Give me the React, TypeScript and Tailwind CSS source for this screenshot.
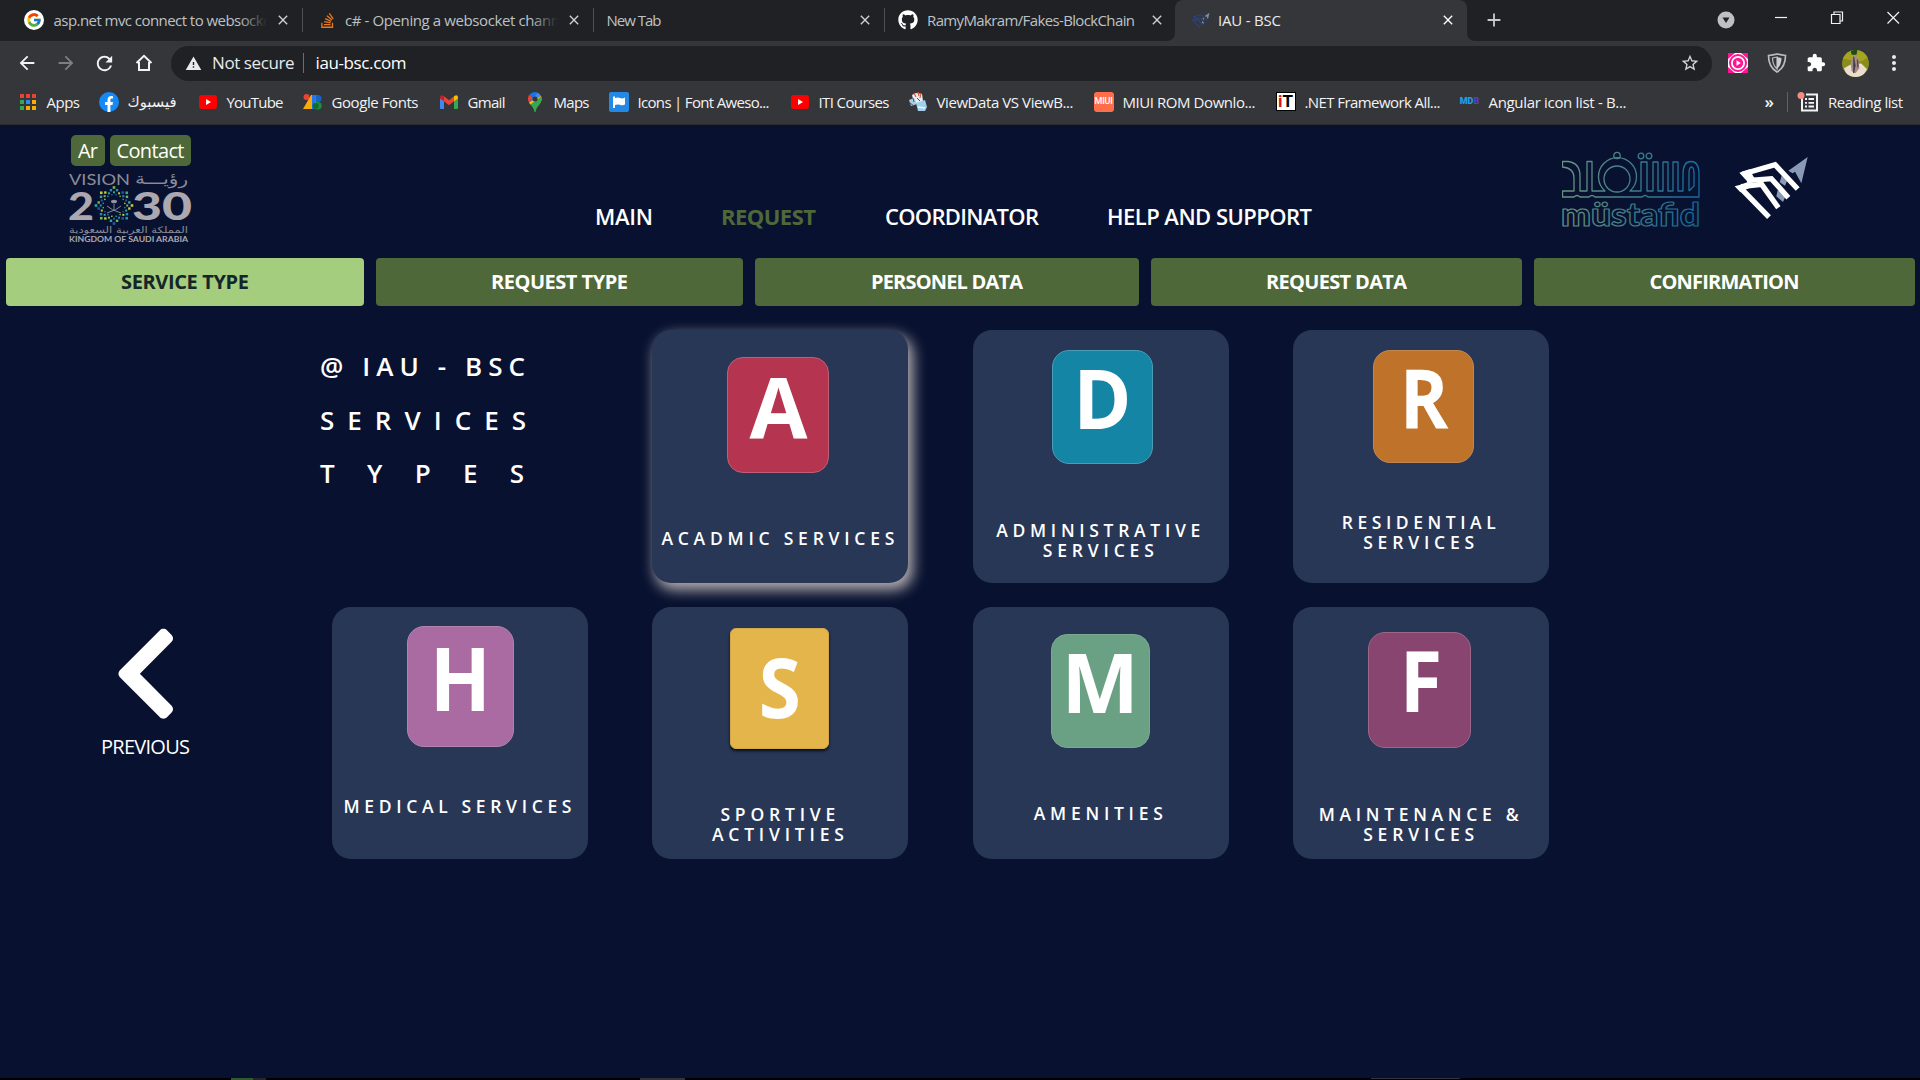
import { useLayoutEffect, useRef, useState } from "react";
import type { ReactNode } from "react";
import { FcGoogle } from "react-icons/fc";
import { FaChevronLeft, FaGithub, FaStackOverflow } from "react-icons/fa";
import {
  MdAdd,
  MdArrowBack,
  MdArrowForward,
  MdClose,
  MdExtension,
  MdMoreVert,
  MdRefresh,
  MdStarBorder,
  MdWarning,
} from "react-icons/md";

/* Text tracked so that it spans exactly `w` pixels. */
function Fit({ w, children, className = "" }: { w: number; children: string; className?: string }) {
  const ref = useRef<HTMLSpanElement>(null);
  const [spacing, setSpacing] = useState(0);
  useLayoutEffect(() => {
    const el = ref.current;
    if (!el) return;
    el.style.letterSpacing = "0px";
    const natural = el.getBoundingClientRect().width;
    const next = (w - natural) / Math.max(1, children.length - 1);
    el.style.letterSpacing = `${next}px`;
    setSpacing(next);
  }, [w, children]);
  return (
    <span
      ref={ref}
      className={`inline-block flex-none whitespace-pre ${className}`}
      style={{ letterSpacing: spacing, marginRight: -spacing }}
    >
      {children}
    </span>
  );
}

/* ---------- browser icons ---------- */

function BscMark({ className, light, dark }: { className: string; light: string; dark: string }) {
  return (
    <svg viewBox="700 90 230 200" className={className} fill="none">
      <path d="M924 96 L866 137 L879 145 L886 140 L905 175 Z" fill={dark} />
      <path d="M846 152 L862 168 L856 182 L840 172 Z M834 196 L862 204 L850 231 L830 214 Z" fill={dark} />
      <g stroke={light} strokeWidth="16">
        <path d="M762 168 L740 144 L826 119 L894 192" strokeMiterlimit="10" />
        <path d="M742 167 L815 161 L866 218" />
        <path d="M724 185 L786 178 L836 248" />
        <path d="M745 179 L724 190 L808 276" />
      </g>
      <path d="M719 143 L750 133 L768 168 L745 172 Z M705 184 L745 173 L750 188 L722 202 Z" fill={light} />
    </svg>
  );
}

function YouTubeIcon() {
  return (
    <svg viewBox="0 0 18 14" className="h-[14px] w-[18px]">
      <rect width="18" height="14" rx="3" fill="#ff0000" />
      <path d="M7 4 L12 7 L7 10 Z" fill="#fff" />
    </svg>
  );
}

function AppsIcon() {
  const colors = ["#ea4335", "#ea4335", "#ea4335", "#34a853", "#2a8cf5", "#fbab05", "#34a853", "#fbab05", "#fbab05"];
  return (
    <div className="grid grid-cols-3 gap-[2px]">
      {colors.map((c, i) => (
        <span key={i} className="size-1" style={{ background: c }} />
      ))}
    </div>
  );
}

function FacebookIcon() {
  return (
    <svg viewBox="0 0 20 20" className="size-5">
      <circle cx="10" cy="10" r="10" fill="#1489f8" />
      <path d="M8.5 20 V13 H6 V10 H8.5 V8 C8.5 5.3 10 4 12.2 4 L14 4.2 V6.6 H12.8 C11.7 6.6 11.4 7.2 11.4 8 V10 H14 L13.5 13 H11.4 V20 Z" fill="#fff" />
    </svg>
  );
}

function GoogleFontsIcon() {
  return (
    <svg viewBox="0 0 20 16" className="h-4 w-5">
      <circle cx="3.5" cy="3" r="3" fill="#ea4335" />
      <path d="M8 1 H13 V15 H10 L5 15 H0 Z" fill="#fbab05" />
      <path d="M9 1 H12.5 V15 H9 Z" fill="#2a75e8" />
      <path d="M12.5 1 H15 A3.5 3.5 0 0 1 15 8 H12.5 Z" fill="#1565c8" />
      <path d="M12.5 8 H15 A3.5 3.5 0 0 1 15 15.4 H12.5 Z" fill="#1e8e3e" />
      <circle cx="12.5" cy="12" r="3" fill="#136c2e" />
    </svg>
  );
}

function GmailIcon() {
  return (
    <svg viewBox="0 0 18 14" className="h-[14px] w-[18px]">
      <path d="M0 3 V13 Q0 14 1 14 H4 V5 Z" fill="#4285f4" />
      <path d="M18 3 V13 Q18 14 17 14 H14 V5 Z" fill="#34a853" />
      <path d="M4 1.2 L9 5.2 L14 1.2 V6.2 L9 10.2 L4 6.2 Z" fill="#ea4335" />
      <path d="M0 2 Q.6 -1 4 1.2 V6.2 L0 3.4 Z" fill="#c5221f" />
      <path d="M18 2 Q17.4 -1 14 1.2 V6.2 L18 3.4 Z" fill="#fbbc04" />
    </svg>
  );
}

function MapsIcon() {
  return (
    <svg viewBox="0 0 14 20" className="h-5 w-[14px]">
      <path d="M7 0 A7 7 0 0 0 1.4 2.8 L5 6 L9.5 .5 A7 7 0 0 0 7 0 Z" fill="#1a73e8" />
      <path d="M1.4 2.8 A7 7 0 0 0 1 10.5 L5 6 Z" fill="#ea4335" />
      <path d="M9.5 .5 A7 7 0 0 1 13 4 L2.4 12.6 L1 10.5 Z" fill="#4285f4" />
      <path d="M13 4 C15 9 12 11.500 10 14 L2.400 12.600 L1 10.500 Z" fill="#fbbc04" />
      <path d="M13.200 4.500 C15 11 9 13 7.500 20 H6.500 C6 17 4.500 15 2.400 12.600 Z" fill="#34a853" />
      <circle cx="7" cy="7" r="2.500" fill="#35363a" />
    </svg>
  );
}

function FlagIcon() {
  return (
    <svg viewBox="0 0 20 20" className="size-5">
      <rect width="20" height="20" rx="2" fill="#228ae6" />
      <path d="M4 4.500 H6 V6 Q8.500 4.800 11 6 Q13.500 7 16 5.500 V12.500 Q13.500 14 11 12.800 Q8.500 12 6 13 V16 H4 Z" fill="#fff" />
    </svg>
  );
}

function CodeProjectIcon() {
  return (
    <svg viewBox="0 0 20 20" className="size-5">
      <path d="M4 3 L8 1 L14 2 L15 9 L12 12 L6 11 Z" fill="#e8eef2" />
      <path d="M6 1 L8 5 M10 0 L11 4 M13 1 L12 6" stroke="#d9573b" strokeWidth="1.2" />
      <path d="M1 8 L6 6 L9 12 L3 14 Z" fill="#a9cfe4" />
      <path d="M8 11 L17 8 L19 15 L17 19 L10 19 Z" fill="#9fd0ee" />
      <path d="M5 6 L6 10 M9 6 L12 9 M2 11 L6 14" stroke="#43545f" strokeWidth="1" />
      <path d="M10 15 L17 16" stroke="#e9f6ff" strokeWidth="1.5" />
    </svg>
  );
}

function MiuiIcon() {
  return (
    <span className="flex size-5 items-center justify-center rounded-[3px] bg-[#ff6e4a] font-['Roboto'] text-[9px] leading-none font-medium tracking-[-0.2px] text-white">
      MIUI
    </span>
  );
}

function ItIcon() {
  return (
    <span className="flex h-[19px] w-5 items-center justify-center border border-black bg-white font-['Roboto'] text-[17px] leading-none font-bold text-black">
      <span className="text-[#d5121d]">i</span>T
    </span>
  );
}

function MdbIcon() {
  return (
    <span className="flex font-['Roboto'] text-[9px] leading-none font-black text-[#1aa0e8]">
      MD<span className="text-[#5a3fc0]">B</span>
    </span>
  );
}

/* ---------- browser chrome ---------- */

type TabProps = { icon?: ReactNode; title: string; textWidth: number; box: string; lead: string; fade?: boolean };

function Tab({ icon, title, textWidth, box, lead, fade }: TabProps) {
  return (
    <div className={`flex h-[40px] flex-none items-center ${box}`}>
      <div className={`flex h-full flex-none items-center ${lead}`}>{icon}</div>
      <div className="relative min-w-0 flex-1 overflow-hidden pb-px text-[15px] leading-[20px] text-[#bdc1c6]">
        <Fit w={textWidth}>{title}</Fit>
        {fade && <span className="absolute inset-y-0 right-0 w-7 bg-linear-to-r from-transparent to-[#202124]" />}
      </div>
      <MdClose className="mr-[11px] ml-2 size-4 flex-none text-[#d0d2d5]" />
      <span className="h-6 w-px flex-none bg-[#4d4f53]" />
    </div>
  );
}

function TabStrip() {
  return (
    <div className="flex h-[41px] bg-[#202124]">
      <Tab
        box="w-[303px]"
        lead="w-[53.500px] pl-6"
        fade
        title="asp.net mvc connect to websocke"
        textWidth={218}
        icon={
          <span className="flex size-5 items-center justify-center rounded-full bg-white">
            <FcGoogle className="size-4" />
          </span>
        }
      />
      <Tab
        box="w-[291px]"
        lead="w-[42px] pl-4"
        fade
        title="c# - Opening a websocket chann"
        textWidth={215}
        icon={<FaStackOverflow className="size-[17px] text-[#e8791e]" />}
      />
      <Tab box="w-[291px]" lead="w-[12.500px]" title="New Tab" textWidth={55} />
      <div className="flex h-[40px] w-[282px] flex-none items-center">
        <div className="flex w-[42px] pl-[13px]">
          <FaGithub className="size-5 text-white" />
        </div>
        <Fit w={208} className="pb-px text-[15px] leading-5 text-[#bdc1c6]">
          RamyMakram/Fakes-BlockChain
        </Fit>
        <MdClose className="ml-[14px] size-4 flex-none text-[#d0d2d5]" />
      </div>
      <div className="w-2 flex-none bg-[#35363a]">
        <div className="h-full rounded-br-lg bg-[#202124]" />
      </div>
      <div className="flex w-[292px] flex-none items-center rounded-t-lg bg-[#35363a] pb-px">
        <div className="w-[43px] pl-[16px]">
          <BscMark className="h-[17px] w-[19px]" light="#2e4272" dark="#7d8fb0" />
        </div>
        <Fit w={63} className="pb-px text-[15px] leading-5 text-[#e8eaed]">
          IAU - BSC
        </Fit>
        <MdClose className="mr-[11px] ml-auto size-4 text-white" />
      </div>
      <div className="w-2 flex-none bg-[#35363a]">
        <div className="h-full rounded-bl-lg bg-[#202124]" />
      </div>
      <div className="flex flex-1 items-center pb-px">
        <MdAdd className="ml-[8px] size-[22px] text-[#c6c9cd]" />
        <svg viewBox="0 0 18 18" className="ml-[212px] size-[18px]">
          <circle cx="9" cy="9" r="8.500" fill="#bdc1c6" />
          <path d="M5.500 6.500 H12.500 L9 12 Z" fill="#202124" />
        </svg>
        <svg viewBox="0 0 130 20" className="mb-[4px] ml-[36px] h-5 w-[130px] flex-none" fill="none" stroke="#f1f1f1" strokeWidth="1.200">
          <path d="M4 9.500 H16" />
          <path d="M60.500 6.500 H69 V15.500 H60.500 Z M63 6.500 V4 H71.500 V13 H69" />
          <path d="M116.500 4 L128 15.500 M128 4 L116.500 15.500" />
        </svg>
      </div>
    </div>
  );
}

function Toolbar() {
  return (
    <div className="flex h-[44px] items-center bg-[#35363a]">
      <div className="flex w-[171px] flex-none items-center pl-4 text-[#f1f3f4]">
        <MdArrowBack className="size-[22px]" />
        <MdArrowForward className="ml-[17px] size-[22px] text-[#7d7f83]" />
        <MdRefresh className="ml-[16px] size-[23px]" />
        <svg viewBox="0 0 18 18" className="ml-[19px] size-[18px]" fill="none" stroke="currentColor" strokeWidth="2">
          <path d="M1.500 9 L9 1.800 L16.500 9 M4 8 V16 H14 V8" />
        </svg>
      </div>
      <div className="flex h-[35px] w-[1541px] flex-none items-center rounded-full bg-[#202124] pl-[14px] text-[17px] text-white">
        <MdWarning className="size-[17px] text-[#e8eaed]" />
        <div className="ml-[10px] flex w-[91px] items-center text-[#e8eaed]">
          <Fit w={82.5}>Not secure</Fit>
        </div>
        <span className="h-5 w-px bg-[#6a6c70]" />
        <div className="ml-[11.500px]">
          <Fit w={91}>iau-bsc.com</Fit>
        </div>
        <MdStarBorder className="mr-[12px] ml-auto size-[20px] text-[#d5d7da]" />
      </div>
      <div className="flex flex-1 items-center">
        <svg viewBox="0 0 20 20" className="ml-[16px] size-5 flex-none">
          <rect width="20" height="20" fill="#fff" />
          <path d="M0 0 H7 L0 6 Z M13 0 H20 V6 Z M0 14 L7 20 H0 Z M20 14 V20 H13 Z" fill="#ff1493" />
          <circle cx="10" cy="10" r="8" fill="#fff" stroke="#ff1493" strokeWidth="2" />
          <circle cx="10" cy="10" r="5.200" fill="#ff1493" />
          <path d="M8.500 7.200 L12.800 10 L8.500 12.800 Z" fill="#fff" />
        </svg>
        <svg viewBox="0 0 20 20" className="ml-[19px] size-5 flex-none" fill="none">
          <path d="M1.500 2.500 Q6 2 10 1 Q14 2 18.500 2.500 Q18.500 14 10 19 Q1.500 14 1.500 2.500 Z" stroke="#b9bbbe" strokeWidth="1.700" />
          <path d="M5.500 5 L10 4 V16 Q5.500 12 5.500 5 Z" stroke="#b9bbbe" strokeWidth="1.200" />
          <path d="M10 4 L14.500 5 Q14.500 12 10 16 Z" fill="#c9cbce" />
        </svg>
        <MdExtension className="ml-[19px] size-5 flex-none text-white" />
        <svg viewBox="0 0 28 28" className="ml-[16px] size-[27px] flex-none overflow-hidden rounded-full">
          <rect width="28" height="28" fill="#8a8c1d" />
          <path d="M0 0 H28 V7 L20 12 L0 9 Z" fill="#a5a51f" />
          <path d="M9 0 H16 L15 5 H10 Z" fill="#1c4a1c" />
          <path d="M2 19 L9 15 L20 14 L26 20 L21 28 H6 Z" fill="#eadfce" />
          <path d="M11 7 L14 5 L17 9 L18 19 L14 24 L10 22 L9 14 Z" fill="#a58a86" />
          <path d="M12 7 L13.500 16 L12 24 M16 10 L16.500 18" stroke="#4c4650" strokeWidth="1.300" />
        </svg>
        <MdMoreVert className="ml-[13px] size-6 flex-none text-[#e8eaed]" />
      </div>
    </div>
  );
}

const bookmarks: { icon: ReactNode; label: string; width: number; box: string }[] = [
  { icon: <AppsIcon />, label: "Apps", width: 33.5, box: "w-[81px]" },
  { icon: <FacebookIcon />, label: "فيسبوك", width: 0, box: "w-[99px]" },
  { icon: <YouTubeIcon />, label: "YouTube", width: 57, box: "w-[105px]" },
  { icon: <GoogleFontsIcon />, label: "Google Fonts", width: 87, box: "w-[136px]" },
  { icon: <GmailIcon />, label: "Gmail", width: 38, box: "w-[86px]" },
  { icon: <MapsIcon />, label: "Maps", width: 36, box: "w-[84px]" },
  { icon: <FlagIcon />, label: "Icons | Font Aweso...", width: 132, box: "w-[181px]" },
  { icon: <YouTubeIcon />, label: "ITI Courses", width: 71, box: "w-[118px]" },
  { icon: <CodeProjectIcon />, label: "ViewData VS ViewB...", width: 137, box: "w-[186px]" },
  { icon: <MiuiIcon />, label: "MIUI ROM Downlo...", width: 133, box: "w-[182px]" },
  { icon: <ItIcon />, label: ".NET Framework All...", width: 136, box: "w-[184px]" },
  { icon: <MdbIcon />, label: "Angular icon list - B...", width: 138, box: "w-[170px]" },
];

function BookmarksBar() {
  return (
    <div className="flex h-10 items-center border-b border-[#2a2b2c] bg-[#35363a] pb-[6px] pl-[17.500px] text-[15px] leading-5 text-[#f1f3f4]">
      {bookmarks.map((b) => (
        <div key={b.box + b.label} className={`flex flex-none items-center gap-[9px] ${b.box}`}>
          <span className="flex w-5 flex-none items-center justify-center">{b.icon}</span>
          {b.width > 0 ? (
            <Fit w={b.width}>{b.label}</Fit>
          ) : (
            <span dir="rtl" className="pt-px pr-px font-['DejaVu_Sans',sans-serif] text-[14.800px]">
              {b.label}
            </span>
          )}
        </div>
      ))}
      <span className="mr-[13px] ml-auto text-[17px] leading-5 font-semibold">»</span>
      <span className="h-5 w-px bg-[#5f6164]" />
      <svg viewBox="0 0 22 20" className="ml-[9px] h-5 w-[22px]" fill="none">
        <path d="M5 5 V18.500 H20 V2.500 H9" stroke="#f1f3f4" strokeWidth="2" />
        <path d="M8 7 H10 M8 10.800 H10 M8 14.500 H10 M11.500 7 H17 M11.500 10.800 H17 M11.500 14.500 H17" stroke="#f1f3f4" strokeWidth="1.800" />
        <circle cx="4" cy="3.500" r="3.500" fill="#f28b82" />
      </svg>
      <div className="mr-[17px] ml-[9px]">
        <Fit w={75}>Reading list</Fit>
      </div>
    </div>
  );
}

/* ---------- page header ---------- */

function EmblemDots() {
  const palette = ["#7ab648", "#1f8fc0", "#2fa7a0", "#1c5f9c", "#c3c93a"];
  const rings = [
    { r: 18, n: 8, s: 2.6, o: 0 },
    { r: 15.6, n: 16, s: 2.4, o: 0.196 },
    { r: 13.2, n: 16, s: 2, o: 0 },
    { r: 11, n: 16, s: 1.4, o: 0.196 },
  ];
  return (
    <g>
      {rings.flatMap((ring, k) =>
        Array.from({ length: ring.n }, (_, i) => {
          const a = ring.o + (i * 2 * Math.PI) / ring.n;
          return (
            <rect
              key={`${k}-${i}`}
              x={45 + ring.r * Math.sin(a) - ring.s / 2}
              y={37.5 - ring.r * Math.cos(a) - ring.s / 2}
              width={ring.s}
              height={ring.s}
              fill={palette[(i * 2 + k) % palette.length]}
            />
          );
        }),
      )}
      <g stroke="#8d94a4" fill="none" strokeWidth="0.9">
        <path d="M45 36 V42 M38 38 Q42 42 52 45 M52 38 Q48 42 38 45" />
        <ellipse cx="45" cy="33.5" rx="3" ry="1.800" fill="#8d94a4" stroke="none" />
      </g>
    </g>
  );
}

function VisionLogo() {
  return (
    <svg viewBox="0 0 124 76" className="mt-[2px] h-[76px] w-[124px]" fill="#aca8b0">
      <g fill="#8c8b98">
        <text x="0" y="16.500" fontFamily="Lato" fontSize="15.500" textLength="61" lengthAdjust="spacingAndGlyphs">
          VISION
        </text>
        <text x="66" y="16" fontFamily="DejaVu Sans" fontSize="16" textLength="53" lengthAdjust="spacingAndGlyphs">
          رؤيـــة
        </text>
        <text x="0" y="65" fontFamily="DejaVu Sans" fontSize="9" textLength="119" lengthAdjust="spacingAndGlyphs">
          المملكة العربية السعودية
        </text>
      </g>
      <g fontFamily="Lato" fontWeight="900" fontSize="38.500">
        <text x="-1" y="51.700" textLength="26" lengthAdjust="spacingAndGlyphs">
          2
        </text>
        <text x="63" y="51.700" textLength="60" lengthAdjust="spacingAndGlyphs">
          30
        </text>
      </g>
      <EmblemDots />
      <text x="0" y="73.700" fontFamily="Lato" fontWeight="700" fontSize="7.200" textLength="119" lengthAdjust="spacingAndGlyphs">
        KINGDOM OF SAUDI ARABIA
      </text>
    </svg>
  );
}

function MustafidLogo() {
  return (
    <svg viewBox="0 0 140 80" className="h-20 w-[140px] flex-none" fill="none" stroke="url(#mustafid)" strokeWidth="1.300" strokeLinejoin="round">
      <defs>
        <linearGradient id="mustafid" gradientUnits="userSpaceOnUse" x1="0" y1="0" x2="140" y2="0">
          <stop offset="0" stopColor="#6a9480" />
          <stop offset="0.5" stopColor="#417d8b" />
          <stop offset="1" stopColor="#136a9f" />
        </linearGradient>
      </defs>
      {/* calligraphic upper word */}
      <path d="M0.500 11.500 H6 Q18 13 18 26 V41 H25 V11.500 H30 V41 H43 A19 19 0 1 1 68 41 H79 V12 H85 V41 H91 V12 H96 V41 H101 V12 H106 V41 H111 V12 H116 V41 H121 V24 Q121 11.500 129 11.500 Q137 11.500 137 24 V47 H86 Q83 44 80 47 H33 Q30 44 27 47 H18 Q15 44 12 47 H0.500 V41 H12 V28 Q12 18 0.500 17 Z" />
      <circle cx="55" cy="29" r="13" />
      <path d="M127 41 V24 Q127 17 129.500 17 Q132 17 132 24 V36 L127 41" />
      <circle cx="55" cy="5.500" r="3.200" />
      <circle cx="79" cy="6" r="2.800" />
      <circle cx="87" cy="6" r="2.800" />
      {/* lower word */}
      <text x="-1" y="75.500" fontFamily="Lato" fontWeight="900" fontSize="33" strokeWidth="1.200" textLength="139" lengthAdjust="spacingAndGlyphs">
        müstafid
      </text>
    </svg>
  );
}

function Header() {
  const nav = [
    { label: "MAIN", width: 58, box: "w-[126px]", tone: "text-white font-semibold" },
    { label: "REQUEST", width: 95, box: "w-[164px]", tone: "text-[#4f6839] font-bold" },
    { label: "COORDINATOR", width: 154, box: "w-[222px]", tone: "text-white font-semibold" },
    { label: "HELP AND SUPPORT", width: 205, box: "w-[455px]", tone: "text-white font-semibold" },
  ];
  return (
    <header className="flex h-[133px] flex-none pl-[69px]">
      <div className="w-[526px] flex-none pt-[10px]">
        <div className="flex gap-[5px] pl-[2px] text-[20px] leading-[32px] text-white">
          <span className="flex h-[31px] w-[34px] justify-center rounded-[5px] bg-[#4f6839]">
            <Fit w={20}>Ar</Fit>
          </span>
          <span className="flex h-[31px] w-[81px] justify-center rounded-[5px] bg-[#4f6839]">
            <Fit w={68}>Contact</Fit>
          </span>
        </div>
        <VisionLogo />
      </div>
      <nav className="flex pt-[76px] text-[22px] leading-[30px]">
        {nav.map((n) => (
          <a key={n.label} className={`flex-none ${n.box} ${n.tone}`}>
            <Fit w={n.width}>{n.label}</Fit>
          </a>
        ))}
      </nav>
      <div className="flex pt-[25px]">
        <MustafidLogo />
        <BscMark className="mt-[5px] ml-[31px] h-[66.700px] w-[76.700px] flex-none" light="#ffffff" dark="#8999b6" />
      </div>
    </header>
  );
}

function Steps() {
  const steps = [
    { label: "SERVICE TYPE", width: 128, box: "w-[358px] bg-[#a5cd7e] text-[#14262a]" },
    { label: "REQUEST TYPE", width: 137, box: "w-[367px] bg-[#4f6839] text-white" },
    { label: "PERSONEL DATA", width: 152, box: "w-[384px] bg-[#4f6839] text-white" },
    { label: "REQUEST DATA", width: 141, box: "w-[371px] bg-[#4f6839] text-white" },
    { label: "CONFIRMATION", width: 150, box: "w-[381px] bg-[#4f6839] text-white" },
  ];
  return (
    <div className="flex h-12 flex-none gap-3 pl-[6px] text-[20px] font-bold">
      {steps.map((s) => (
        <div key={s.label} className={`flex flex-none items-center justify-center rounded-[4px] ${s.box}`}>
          <Fit w={s.width}>{s.label}</Fit>
        </div>
      ))}
    </div>
  );
}

/* ---------- service cards ---------- */

type Service = {
  letter: string;
  card: string;
  tile: string;
  glyph: string;
  label: string;
  lines: [string, number][];
};

const services: Service[] = [
  {
    letter: "A",
    card: "h-[253px] pt-[27px] shadow-[4px_6px_14px_1px_#b5afb2]",
    tile: "ml-[75px] w-[102px] h-[116px] rounded-[16px] bg-[#b5344f] border-[#bd6077]",
    glyph: "pt-[18px] text-[84px]",
    label: "mt-[55px]",
    lines: [["ACADMIC SERVICES", 233]],
  },
  {
    letter: "D",
    card: "h-[253px] pt-[20px]",
    tile: "ml-[79px] w-[101px] h-[114px] rounded-[17px] bg-[#1585a5] border-[#4b9cb5]",
    glyph: "pt-[16px] text-[82px] scale-x-[0.96]",
    label: "mt-[56px]",
    lines: [
      ["ADMINISTRATIVE", 204],
      ["SERVICES", 111],
    ],
  },
  {
    letter: "R",
    card: "h-[253px] pt-[20px]",
    tile: "ml-[80px] w-[101px] h-[113px] rounded-[17px] bg-[#be722a] border-[#c48650]",
    glyph: "pt-[16px] text-[82px] scale-x-[0.9]",
    label: "mt-[49px]",
    lines: [
      ["RESIDENTIAL", 154],
      ["SERVICES", 111],
    ],
  },
  {
    letter: "H",
    card: "h-[252px] pt-[19px]",
    tile: "ml-[75px] w-[107px] h-[121px] rounded-[17px] bg-[#a96ba1] border-[#b283ad]",
    glyph: "pt-[20px] text-[87px] scale-x-[0.92]",
    label: "mt-[49px]",
    lines: [["MEDICAL SERVICES", 228]],
  },
  {
    letter: "S",
    card: "h-[252px] pt-[21px]",
    tile: "ml-[78px] w-[99px] h-[121px] rounded-[6px] bg-[#e3b54a] border-[#d2a849] shadow-[0_2px_3px_rgba(0,0,0,0.8)]",
    glyph: "pt-[27px] text-[83px] scale-x-[0.92]",
    label: "mt-[55px]",
    lines: [
      ["SPORTIVE", 115],
      ["ACTIVITIES", 132],
    ],
  },
  {
    letter: "M",
    card: "h-[252px] pt-[27px]",
    tile: "ml-[78px] w-[99px] h-[114px] rounded-[16px] bg-[#6aa084] border-[#7aa893]",
    glyph: "pt-[16px] text-[82px]",
    label: "mt-[55px]",
    lines: [["AMENITIES", 129]],
  },
  {
    letter: "F",
    card: "h-[252px] pt-[25px]",
    tile: "ml-[75px] w-[103px] h-[116px] rounded-[17px] bg-[#88456f] border-[#9c6689]",
    glyph: "pt-[17px] pl-[2px] text-[84px] scale-x-[0.92]",
    label: "mt-[56px]",
    lines: [
      ["MAINTENANCE &", 200],
      ["SERVICES", 111],
    ],
  },
];

function ServiceCard({ s }: { s: Service }) {
  return (
    <div className={`w-[256px] rounded-[19px] bg-[#293757] ${s.card}`}>
      <div className={`flex justify-center border ${s.tile}`}>
        <span className={`leading-[60px] font-bold text-white ${s.glyph}`}>{s.letter}</span>
      </div>
      <div className={`flex flex-col items-center pr-[5px] text-[17.500px] leading-5 font-semibold text-white ${s.label}`}>
        {s.lines.map(([text, width]) => (
          <Fit key={text} w={width}>
            {text}
          </Fit>
        ))}
      </div>
    </div>
  );
}

export default function App() {
  return (
    <div className="flex h-[1080px] w-[1920px] flex-col overflow-hidden bg-[#081230] font-['Open_Sans','Noto_Sans',sans-serif]">
      <div className="flex-none">
        <TabStrip />
        <Toolbar />
        <BookmarksBar />
      </div>
      <Header />
      <Steps />
      <main className="flex flex-1 pt-6">
        <aside className="flex w-[332px] flex-none flex-col pt-[291px] pl-[101px] text-white">
          <FaChevronLeft className="ml-[-8px] h-[105.500px] w-[105.500px]" />
          <span className="mt-[5px] text-[20px] leading-[30px]">
            <Fit w={89}>PREVIOUS</Fit>
          </span>
        </aside>
        <section className="grid auto-rows-max grid-cols-[repeat(4,256px)] gap-x-[64.400px] gap-y-6">
          <h1 className="-ml-[12px] flex flex-col pt-[10px] text-[26px] leading-[53.500px] font-semibold text-white">
            <Fit w={205} className="self-start">@ IAU - BSC</Fit>
            <Fit w={206} className="self-start">SERVICES</Fit>
            <Fit w={204} className="self-start">TYPES</Fit>
          </h1>
          {services.map((s) => (
            <ServiceCard key={s.letter} s={s} />
          ))}
        </section>
      </main>
      <footer className="flex h-[2px] flex-none bg-black">
        <span className="ml-[231px] w-[22px] bg-[#2c5a2a]" />
        <span className="w-[13px] bg-[#26262a]" />
        <span className="ml-[374px] w-[45px] bg-[#333238]" />
        <span className="ml-[686px] h-px w-[89px] bg-[#333238]" />
      </footer>
    </div>
  );
}
